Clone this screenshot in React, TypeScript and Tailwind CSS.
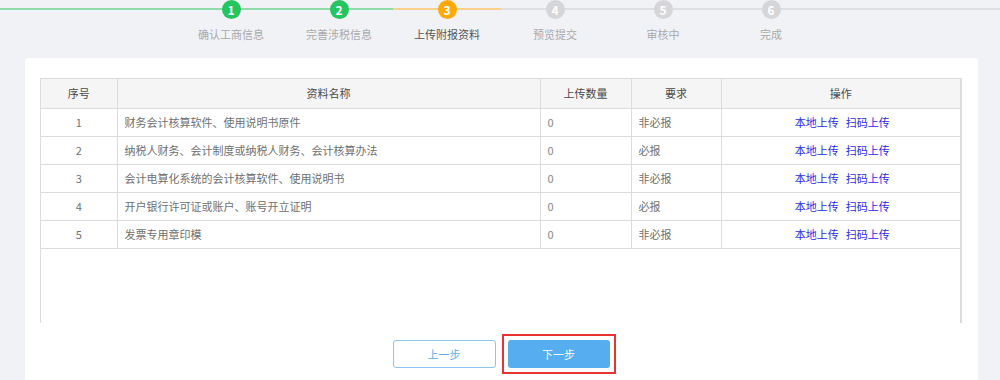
import React from "react";

const steps = [
  { n: 1, label: "确认工商信息", state: "done" },
  { n: 2, label: "完善涉税信息", state: "done" },
  { n: 3, label: "上传附报资料", state: "current" },
  { n: 4, label: "预览提交", state: "todo" },
  { n: 5, label: "审核中", state: "todo" },
  { n: 6, label: "完成", state: "todo" },
];

const rows = [
  { id: 1, name: "财务会计核算软件、使用说明书原件", count: 0, need: "非必报" },
  { id: 2, name: "纳税人财务、会计制度或纳税人财务、会计核算办法", count: 0, need: "必报" },
  { id: 3, name: "会计电算化系统的会计核算软件、使用说明书", count: 0, need: "非必报" },
  { id: 4, name: "开户银行许可证或账户、账号开立证明", count: 0, need: "必报" },
  { id: 5, name: "发票专用章印模", count: 0, need: "非必报" },
];

const Step = ({ n, label, state }: { n: number; label: string; state: string }) => {
  const line =
    state === "done" ? "bg-[#8fdcaa]" : state === "current" ? "bg-[#fad08e]" : "bg-[#dedfe3]";
  const dot =
    state === "done" ? "bg-[#22c55e]" : state === "current" ? "bg-[#ffa90a]" : "bg-[#d6d6d8]";
  const text = state === "current" ? "text-[#555]" : "text-[#a9a9ab]";
  return (
    <div className="w-[108px] flex flex-col items-center">
      <div className="relative w-full h-[19px] flex justify-center">
        <div className={`absolute inset-x-0 top-[8px] h-[2px] ${line}`} />
        <div
          className={`relative w-[19px] h-[19px] rounded-full ${dot} text-white text-[12px] font-bold flex items-center justify-center leading-none`}
        >
          {n}
        </div>
      </div>
      <div className={`mt-[7px] text-[11px] leading-[16px] ${text}`}>{label}</div>
    </div>
  );
};

export default function App() {
  return (
    <div
      className="w-[1000px] h-[380px] overflow-hidden bg-[#f1f2f6]"
      style={{ fontFamily: '"Noto Sans CJK SC", "Noto Sans", sans-serif' }}
    >
      <div className="flex">
        <div className="w-[177px] pt-[8px]">
          <div className="h-[2px] bg-[#8fdcaa]" />
        </div>
        {steps.map((s) => (
          <Step key={s.n} {...s} />
        ))}
        <div className="flex-1 pt-[8px]">
          <div className="h-[2px] bg-[#dedfe3]" />
        </div>
      </div>

      <div className="ml-[25px] mt-[16px] w-[953px] h-[330px] bg-white rounded-[4px] pt-[20px] pl-[15px] pr-[16px]">
        <div className="h-[245px] border-l border-r-2 border-t border-[#dcdcdc]">
          <table className="w-full border-collapse table-fixed text-[11px] text-[#707070]">
            <colgroup>
              <col className="w-[76px]" />
              <col className="w-[423px]" />
              <col className="w-[91px]" />
              <col className="w-[90px]" />
              <col />
            </colgroup>
            <thead>
              <tr className="bg-[#f5f5f5] text-[#4a4a4a] h-[29px]">
                <th className="font-normal border-b border-r border-[#dcdcdc]">序号</th>
                <th className="font-normal border-b border-r border-[#dcdcdc]">资料名称</th>
                <th className="font-normal border-b border-r border-[#dcdcdc]">上传数量</th>
                <th className="font-normal border-b border-r border-[#dcdcdc]">要求</th>
                <th className="font-normal border-b border-[#dcdcdc]">操作</th>
              </tr>
            </thead>
            <tbody>
              {rows.map((r) => (
                <tr key={r.id} className="h-[28px]">
                  <td className="text-center border-b border-r border-[#dcdcdc]">{r.id}</td>
                  <td className="px-[7px] border-b border-r border-[#dcdcdc]">{r.name}</td>
                  <td className="px-[7px] text-[#8a8a8a] border-b border-r border-[#dcdcdc]">{r.count}</td>
                  <td className="px-[7px] border-b border-r border-[#dcdcdc]">{r.need}</td>
                  <td className="border-b border-[#dcdcdc]">
                    <div className="flex justify-center gap-[7px] pl-[3px] text-[#2d2de0]">
                      <span>本地上传</span>
                      <span>扫码上传</span>
                    </div>
                  </td>
                </tr>
              ))}
            </tbody>
          </table>
        </div>

        <div className="mt-[11px] pl-[6px] flex justify-center items-center gap-[6px]">
          <button className="w-[103px] h-[28px] rounded-[3px] border border-[#8cc6f5] bg-white text-[#5aaef0] text-[11px]">
            上一步
          </button>
          <div className="border-2 border-[#e8332f] p-[4px]">
            <button className="block w-[102px] h-[28px] rounded-[3px] bg-[#56adf0] text-white text-[11px]">
              下一步
            </button>
          </div>
        </div>
      </div>
    </div>
  );
}
